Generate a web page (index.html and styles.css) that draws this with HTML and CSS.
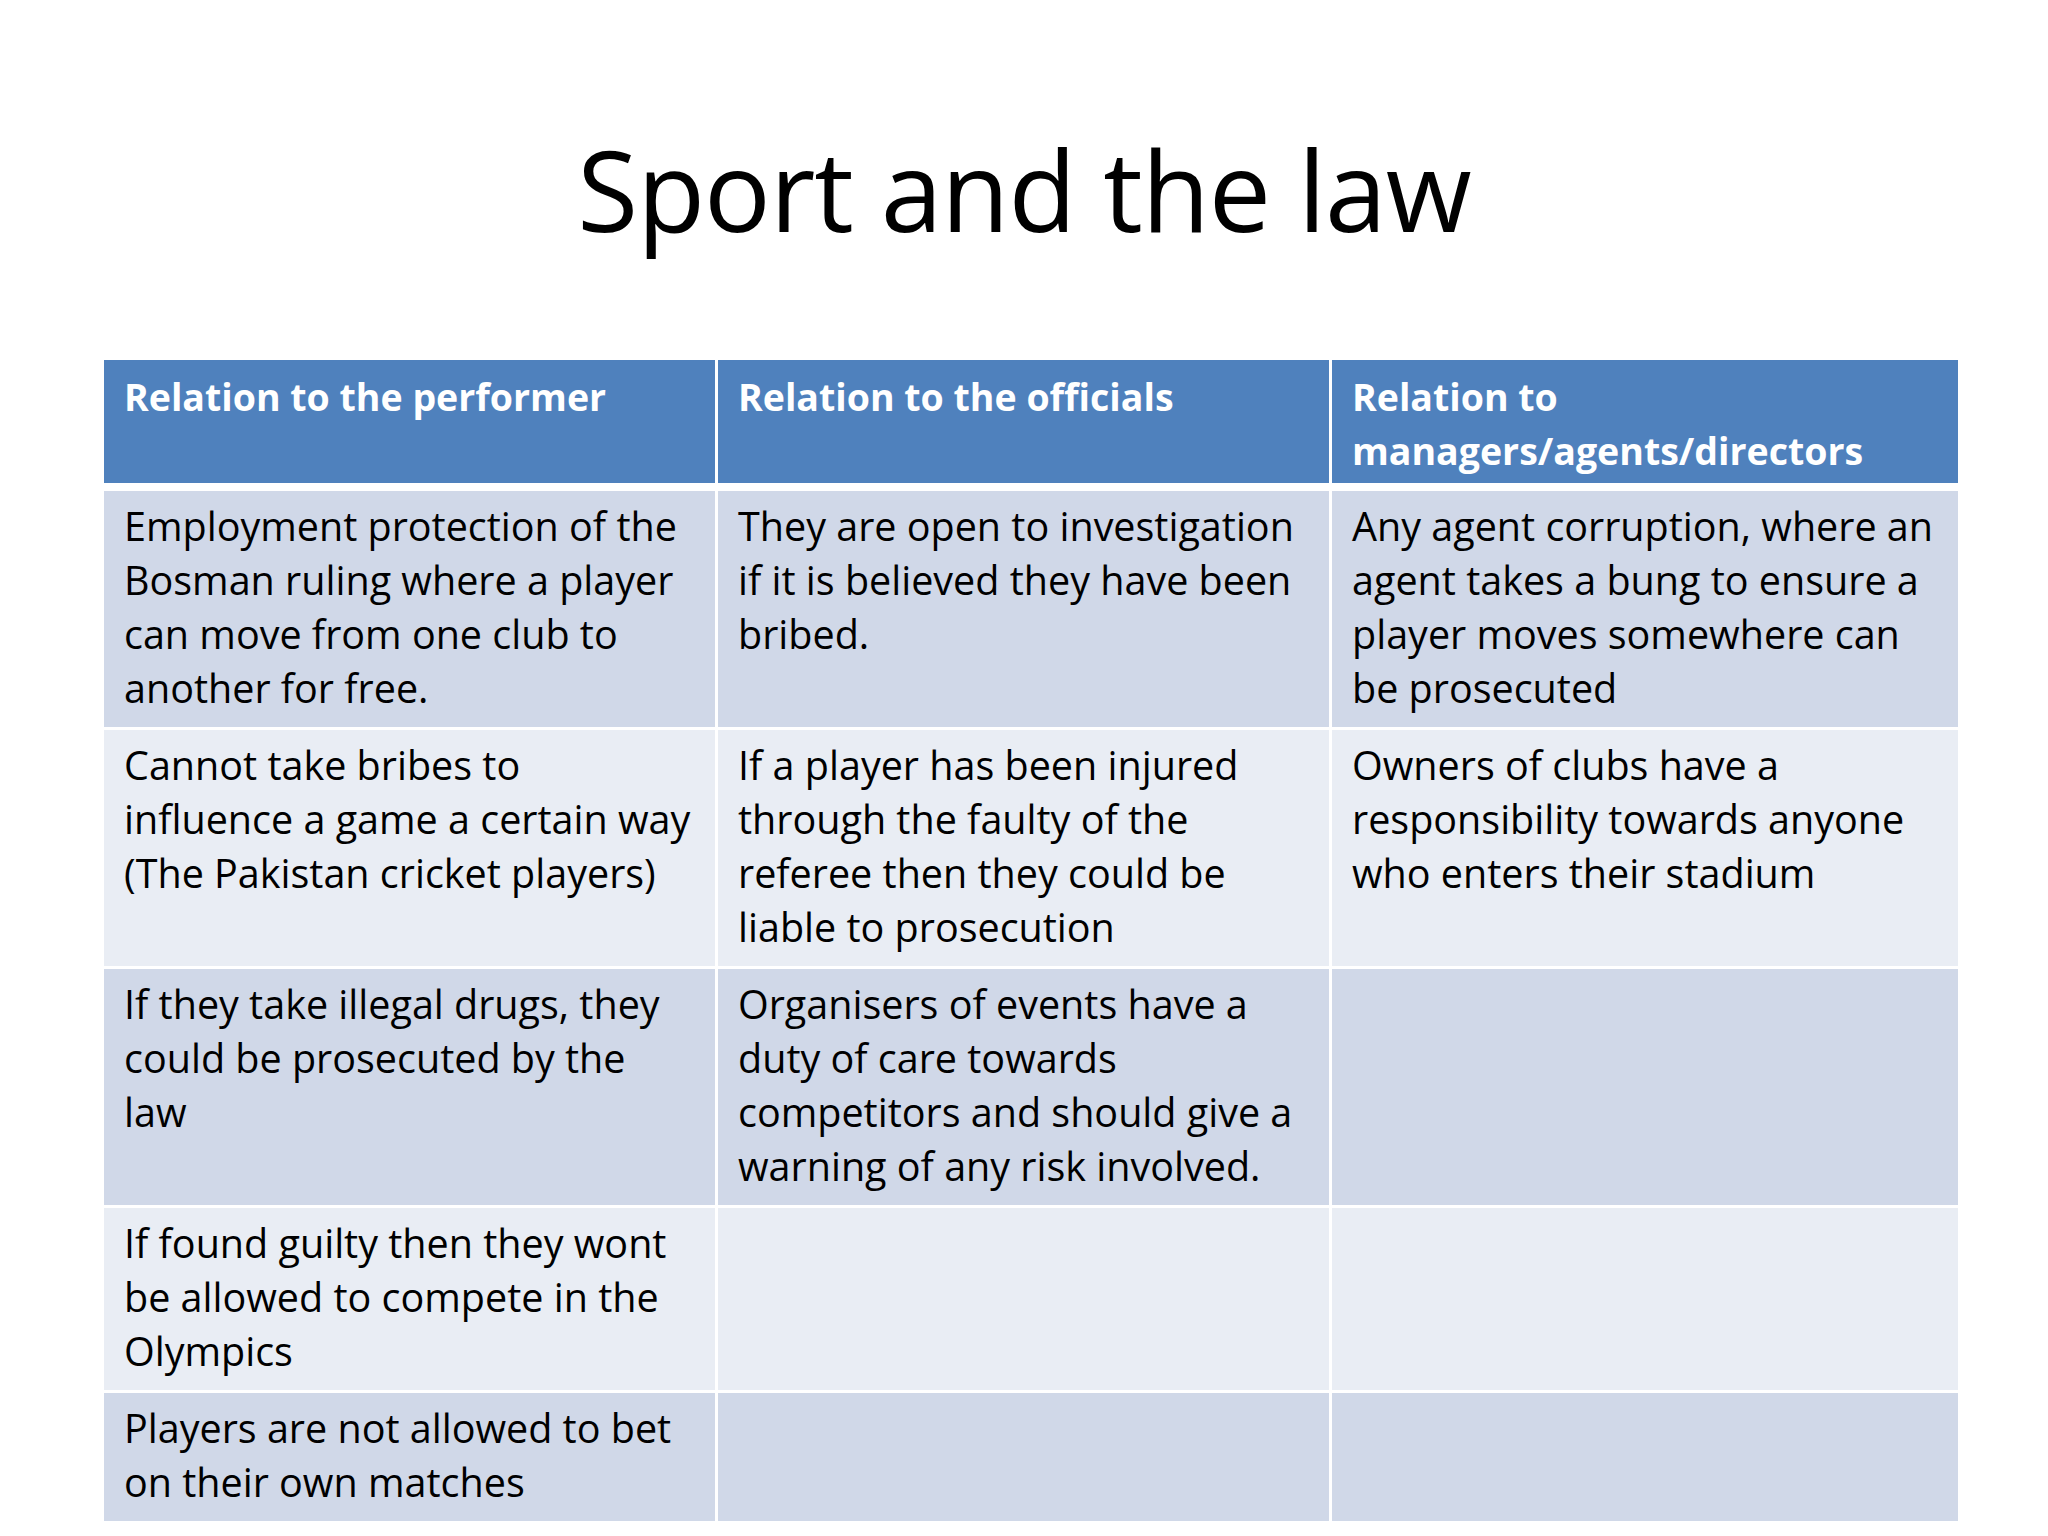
FILE: index.html
```html
<!DOCTYPE html>
<html lang="en">
<head>
<meta charset="utf-8">
<title>Sport and the law</title>
<link rel="stylesheet" href="styles.css">
</head>
<body>
<div class="slide">
  <h1 class="title">Sport and the law</h1>
  <div class="table">
    <div class="cell head">Relation to the performer</div>
    <div class="cell head">Relation to the officials</div>
    <div class="cell head">Relation to<br>managers/agents/directors</div>

    <div class="cell dark">Employment protection of the<br>Bosman ruling where a player<br>can move from one club to<br>another for free.</div>
    <div class="cell dark">They are open to investigation<br>if it is believed they have been<br>bribed.</div>
    <div class="cell dark">Any agent corruption, where an<br>agent takes a bung to ensure a<br>player moves somewhere can<br>be prosecuted</div>

    <div class="cell light">Cannot take bribes to<br>influence a game a certain way<br>(The Pakistan cricket players)</div>
    <div class="cell light">If a player has been injured<br>through the faulty of the<br>referee then they could be<br>liable to prosecution</div>
    <div class="cell light">Owners of clubs have a<br>responsibility towards anyone<br>who enters their stadium</div>

    <div class="cell dark">If they take illegal drugs, they<br>could be prosecuted by the<br>law</div>
    <div class="cell dark">Organisers of events have a<br>duty of care towards<br>competitors and should give a<br>warning of any risk involved.</div>
    <div class="cell dark"></div>

    <div class="cell light">If found guilty then they wont<br>be allowed to compete in the<br>Olympics</div>
    <div class="cell light"></div>
    <div class="cell light"></div>

    <div class="cell dark">Players are not allowed to bet<br>on their own matches</div>
    <div class="cell dark"></div>
    <div class="cell dark"></div>
  </div>
</div>
</body>
</html>
```
FILE: styles.css
```css
html, body {
  margin: 0;
  padding: 0;
  background: #ffffff;
}
body {
  font-family: "Open Sans", "Noto Sans", "Liberation Sans", sans-serif;
  color: #000000;
}
.slide {
  width: 2048px;
  height: 1536px;
  overflow: hidden;
  display: flex;
  flex-direction: column;
}
.title {
  margin: 124px 0 0 0;
  height: 130px;
  font-size: 111px;
  line-height: 130px;
  font-weight: 400;
  letter-spacing: -1px;
  text-align: center;
}
.table {
  margin: 106px 0 0 104px;
  display: grid;
  grid-template-columns: 611px 611px 626px;
  column-gap: 3px;
  row-gap: 3px;
  align-self: flex-start;
}
.cell {
  padding: 8px 20px 12px 20px;
  font-size: 39.5px;
  line-height: 54px;
  white-space: nowrap;
}
.head {
  background: #4f81bd;
  color: #ffffff;
  font-weight: 700;
  font-size: 37.5px;
  padding: 10px 20px 5px 20px;
  margin-bottom: 5px;
}
.dark {
  background: #d0d8e8;
}
.light {
  background: #e9edf4;
}
```
